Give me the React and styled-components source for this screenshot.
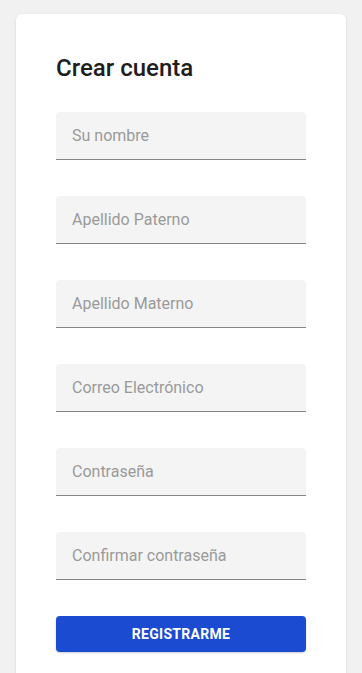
import React from "react";
import styled, { createGlobalStyle } from "styled-components";

const GlobalStyle = createGlobalStyle`
    html, body {
        margin: 0;
        padding: 0;
        background-color: #F1F1F1;
        font-family: Roboto, "Liberation Sans", sans-serif;
    }
`;

const Page = styled.div`
    min-height: 100vh;
    padding: 14px 16px 0;
    box-sizing: border-box;
    overflow: hidden;
`;

const Card = styled.form`
    background: #fff;
    border-radius: 6px;
    box-shadow: 0 1px 3px rgba(0, 0, 0, 0.12);
    padding: 40px 40px 40px;
    display: flex;
    flex-direction: column;
`;

const Title = styled.h1`
    font-family: "Roboto Medium", Roboto, sans-serif;
    font-size: 24px;
    font-weight: 500;
    color: #1E1E1E;
    margin: 0 0 30px;
    line-height: 28px;
`;

const Field = styled.input`
    font-family: inherit;
    font-size: 16px;
    color: #333;
    background: #F4F4F4;
    border: none;
    border-bottom: 1px solid #858585;
    border-radius: 4px 4px 0 0;
    height: 48px;
    box-sizing: border-box;
    padding: 0 16px;
    margin-bottom: 36px;
    outline: none;
    width: 100%;

    &::placeholder {
        color: #9A9A9A;
    }
`;

const Button = styled.button`
    font-family: inherit;
    font-weight: 700;
    font-size: 14px;
    letter-spacing: 0.3px;
    color: #fff;
    background: #1A4BD0;
    border: none;
    border-radius: 4px;
    height: 36px;
    text-transform: uppercase;
    box-shadow: 0 1px 2px rgba(0, 0, 0, 0.2);
    cursor: pointer;
`;

const fields = [
    { type: "text", placeholder: "Su nombre" },
    { type: "text", placeholder: "Apellido Paterno" },
    { type: "text", placeholder: "Apellido Materno" },
    { type: "email", placeholder: "Correo Electrónico" },
    { type: "password", placeholder: "Contraseña" },
    { type: "password", placeholder: "Confirmar contraseña" },
];

export default function App() {
    return (
        <Page>
            <GlobalStyle />
            <Card onSubmit={e => e.preventDefault()}>
                <Title>Crear cuenta</Title>
                {fields.map(f => (
                    <Field key={f.placeholder} type={f.type} placeholder={f.placeholder} />
                ))}
                <Button type="submit">Registrarme</Button>
            </Card>
        </Page>
    );
}
